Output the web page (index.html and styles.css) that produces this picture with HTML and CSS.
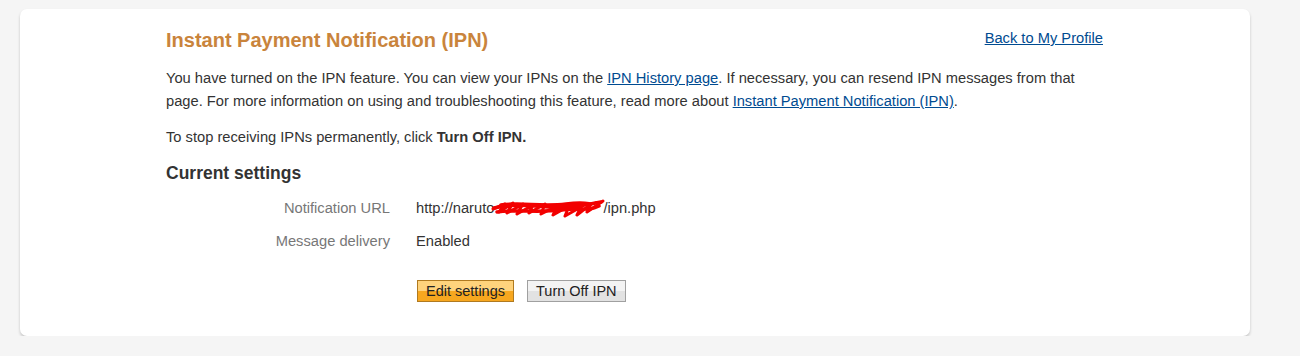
FILE: index.html
```html
<!DOCTYPE html>
<html lang="en">
<head>
  <meta charset="UTF-8" />
  <title>Instant Payment Notification (IPN)</title>
  <link rel="stylesheet" href="styles.css">
</head>
<body>
  <div class="card">
    <div class="head">
      <h1>Instant Payment Notification (IPN)</h1>
      <a href="#" class="back">Back to My Profile</a>
    </div>
    <p class="intro">You have turned on the IPN feature. You can view your IPNs on the <a href="#">IPN History page</a>. If necessary, you can resend IPN messages from that page. For more information on using and troubleshooting this feature, read more about <a href="#">Instant Payment Notification (IPN)</a>.</p>
    <p>To stop receiving IPNs permanently, click <b>Turn Off IPN.</b></p>
    <h2>Current settings</h2>
    <div class="settings">
      <div class="row">
        <span class="label">Notification URL</span>
        <span class="value">http://naruto<svg class="scribble" width="116" height="22" viewBox="0 0 116 22"><path d="M2 11 L14 6 L8 14 L22 5 L16 15 L32 6 L26 16 L42 7 L38 15 L54 6 L50 16 L66 8 L62 17 L78 8 L74 18 L90 9 L86 17 L100 6 L96 14 L112 3" fill="none" stroke="#f20000" stroke-width="3" stroke-linejoin="round" stroke-linecap="round"/><path d="M3 10 C20 5 40 8 60 9 S90 8 110 4 M6 14 C25 11 45 15 70 12 S95 14 108 8 M10 7 C30 4 50 9 75 6 S98 8 104 5" fill="none" stroke="#f20000" stroke-width="3.5" stroke-linecap="round"/></svg>/ipn.php</span>
      </div>
      <div class="row">
        <span class="label">Message delivery</span>
        <span class="value">Enabled</span>
      </div>
      <div class="row buttons">
        <span class="label"></span>
        <span class="value">
          <button class="btn primary">Edit settings</button>
          <button class="btn">Turn Off IPN</button>
        </span>
      </div>
    </div>
  </div>
</body>
</html>
```

FILE: styles.css
```css
body {
  margin: 0;
  padding: 9px 0 0 20px;
  background: #f5f5f5;
  font-family: Arial, "Liberation Sans", sans-serif;
  font-size: 14.7px;
  color: #333;
}
.card {
  width: 1230px;
  height: 327px;
  box-sizing: border-box;
  padding: 19px 147px 0 146px;
  background: #fff;
  border-radius: 7px;
  box-shadow: 0 2px 3px rgba(0, 0, 0, 0.2);
}
.head {
  display: flex;
  justify-content: space-between;
  align-items: flex-start;
}
h1 {
  margin: 0;
  font-size: 20px;
  line-height: 24px;
  color: #c9843c;
}
.back {
  line-height: 20px;
}
a {
  color: #004b91;
  text-decoration: underline;
}
p {
  margin: 13px 0 0;
  line-height: 23px;
}
p.intro {
  margin-top: 15px;
}
h2 {
  margin: 13px 0 0;
  font-size: 17.5px;
  line-height: 22px;
  color: #333;
}
.settings {
  margin-top: 14px;
}
.row {
  display: flex;
  gap: 26px;
  height: 20px;
  line-height: 20px;
  margin-bottom: 13px;
}
.label {
  width: 224px;
  text-align: right;
  color: #777;
}
.value {
  display: flex;
  align-items: center;
  color: #333;
}
.scribble {
  margin: -2px -4px -2px -3px;
  position: relative;
  top: 1px;
}
.buttons {
  margin-top: 29px;
  height: 22px;
}
.buttons .value {
  gap: 13px;
  padding-left: 1px;
}
.btn {
  height: 22px;
  padding: 0 8px;
  font-family: Arial, "Liberation Sans", sans-serif;
  font-size: 14.5px;
  color: #222;
  border: 1px solid #a0a0a0;
  border-radius: 0;
  background: linear-gradient(#f3f3f3 50%, #e2e2e2 50%);
}
.btn.primary {
  border-color: #b07a20;
  background: linear-gradient(#ffd37c 50%, #f7a71f 50%);
}
```
